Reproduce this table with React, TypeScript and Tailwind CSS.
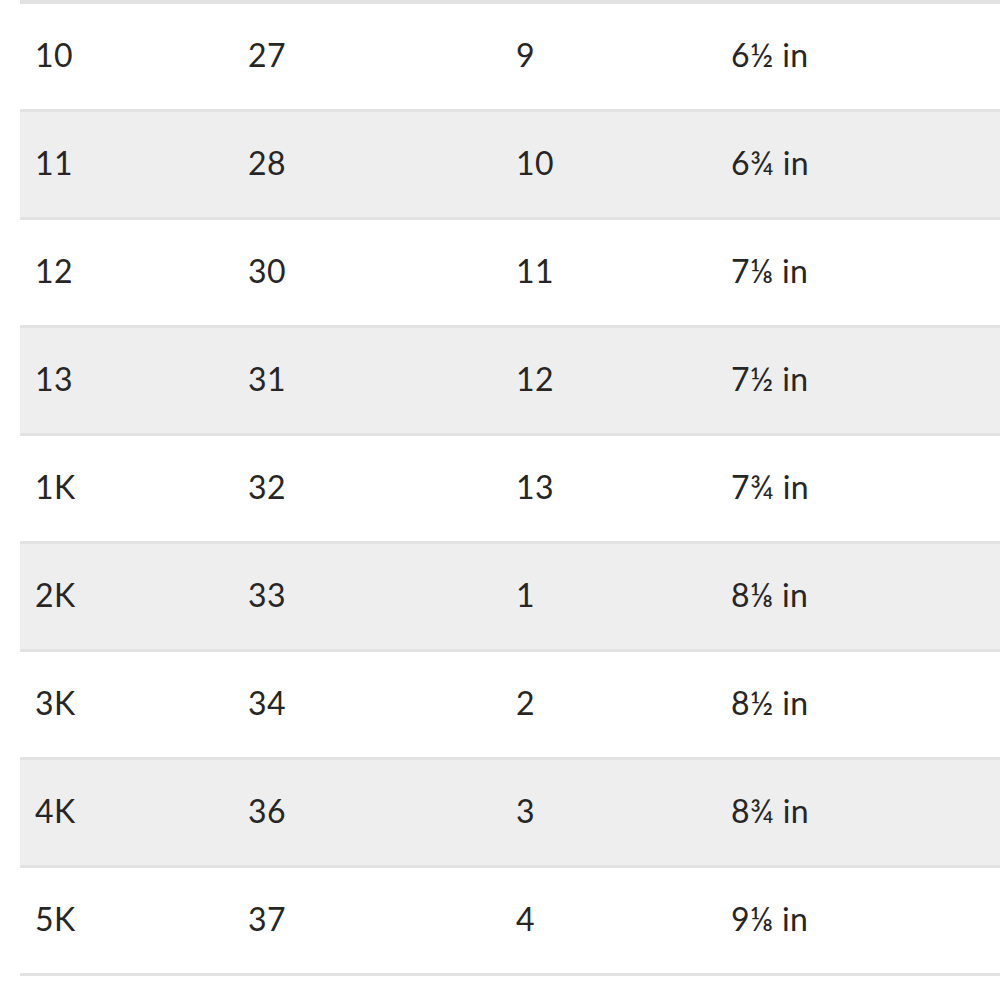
const rows: [string, string, string, string][] = [
  ["10", "27", "9", "6½ in"],
  ["11", "28", "10", "6¾ in"],
  ["12", "30", "11", "7⅛ in"],
  ["13", "31", "12", "7½ in"],
  ["1K", "32", "13", "7¾ in"],
  ["2K", "33", "1", "8⅛ in"],
  ["3K", "34", "2", "8½ in"],
  ["4K", "36", "3", "8¾ in"],
  ["5K", "37", "4", "9⅛ in"],
]

export default function App() {
  return (
    <div className="min-h-screen bg-white overflow-hidden">
      <div className="ml-[20px] w-[1000px] border-t-4 border-[#e2e2e2] font-['Lato',sans-serif] tracking-[0.4px] text-[#262626] text-[32px]">
        {rows.map((r, i) => (
          <div
            key={r[0]}
            className={`grid grid-cols-[213px_268px_215px_1fr] h-[108px] items-center border-b-[3px] border-[#e2e2e2] pb-[3px] ${
              i % 2 === 1 ? "bg-[#eeeeee]" : "bg-white"
            }`}
          >
            {r.map((c, j) => (
              <div key={j} className="pl-[15px] leading-none">
                {c}
              </div>
            ))}
          </div>
        ))}
      </div>
    </div>
  )
}
